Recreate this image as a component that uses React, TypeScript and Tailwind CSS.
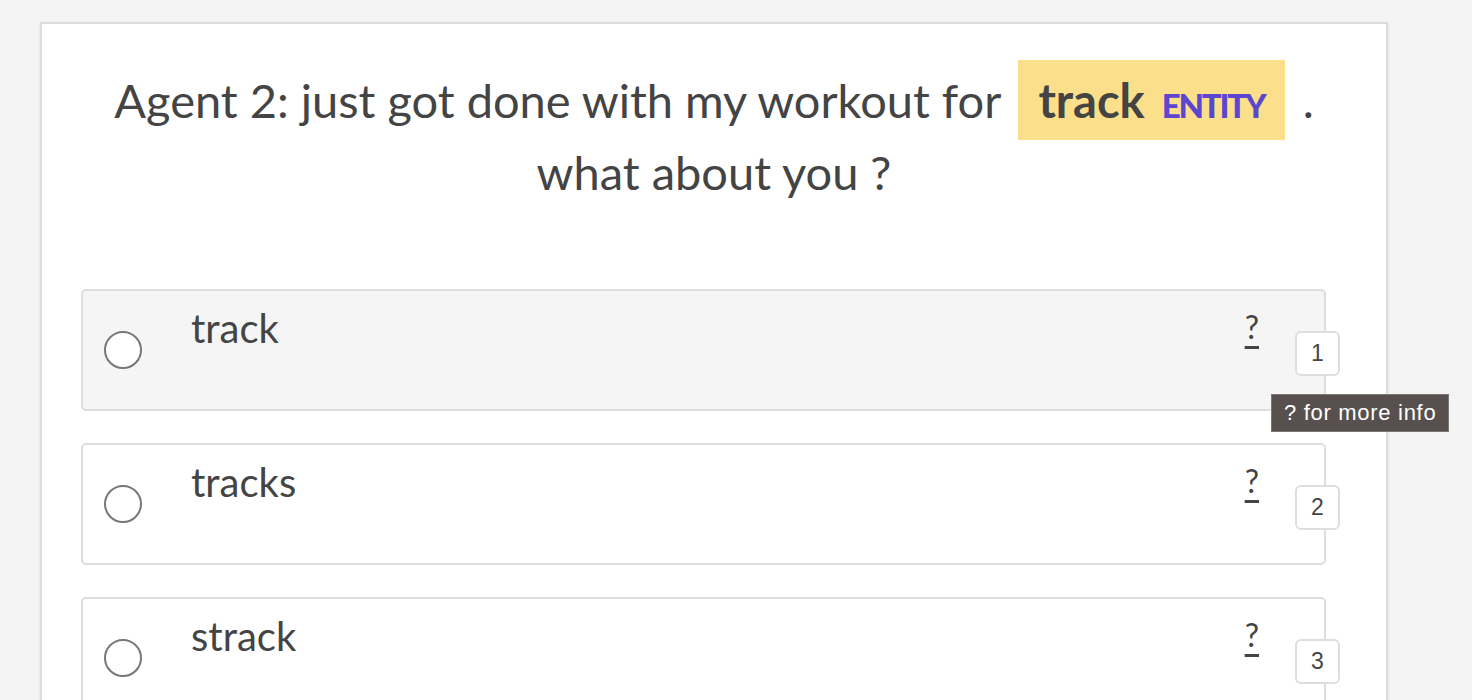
import React from 'react';

const options = [
  { label: 'track', key: 1, hover: true },
  { label: 'tracks', key: 2 },
  { label: 'strack', key: 3 },
];

const Option = ({ label, num, hover }: { label: string; num: number; hover?: boolean }) => (
  <div
    className={`relative flex h-[122px] rounded-[5px] border-2 border-[#dedede] ${hover ? 'bg-[#f5f5f5]' : 'bg-white'}`}
  >
    <div className="flex w-[108px] items-center pl-[21px]">
      <span className="block h-[38px] w-[38px] rounded-full border-2 border-[#777] bg-white" />
    </div>
    <div className="flex-1 pt-[10px] text-[40px] leading-[54px] text-[#444]">{label}</div>
    <div className="pr-[65px] pt-[16px]">
      <span className="text-[32px] leading-[40px] text-[#444] underline decoration-[3px] underline-offset-[7px]">?</span>
    </div>
    {/* shortcut key */}
    <div className="absolute right-[-16px] top-[40px] flex h-[45px] w-[45px] items-center justify-center rounded-[6px] border-2 border-[#dedede] bg-white font-['Liberation_Sans',sans-serif] text-[23px] text-[#444]">
      {num}
    </div>
    {hover && (
      <div className="absolute left-[1188px] top-[103px] z-10 whitespace-nowrap border border-[#777] bg-[#57504e] px-[12px] py-[5px] font-['Liberation_Sans',sans-serif] text-[22px] leading-[26px] tracking-[0.7px] text-white">
        ? for more info
      </div>
    )}
  </div>
);

export default function App() {
  return (
    <div className="min-h-[700px] bg-[#f4f4f4] pt-[22px] font-['Lato',sans-serif]">
      <div className="ml-10 h-[700px] w-[1348px] border-2 border-[#dcdcdc] bg-white shadow-sm">
        <div className="px-10 pt-[40px] text-center text-[47px] leading-[72px] text-[#444]">
          Agent 2: just got done with my workout for{' '}
          <span className="ml-[6px] bg-[#fcdf8a] px-5 py-[12px] font-bold">
            track
            <span className="ml-[17px] text-[33px] font-black leading-none tracking-[-2.2px] text-[#5b47cf]">ENTITY</span>
          </span>{' '}
          <span className="ml-[6px]">.</span>
          <br />
          what about you ?
        </div>
        <div className="mt-[81px] flex flex-col gap-[32px] pl-[39px] pr-[60px]">
          {options.map((o) => (
            <Option key={o.key} label={o.label} num={o.key} hover={o.hover} />
          ))}
        </div>
      </div>
    </div>
  );
}
